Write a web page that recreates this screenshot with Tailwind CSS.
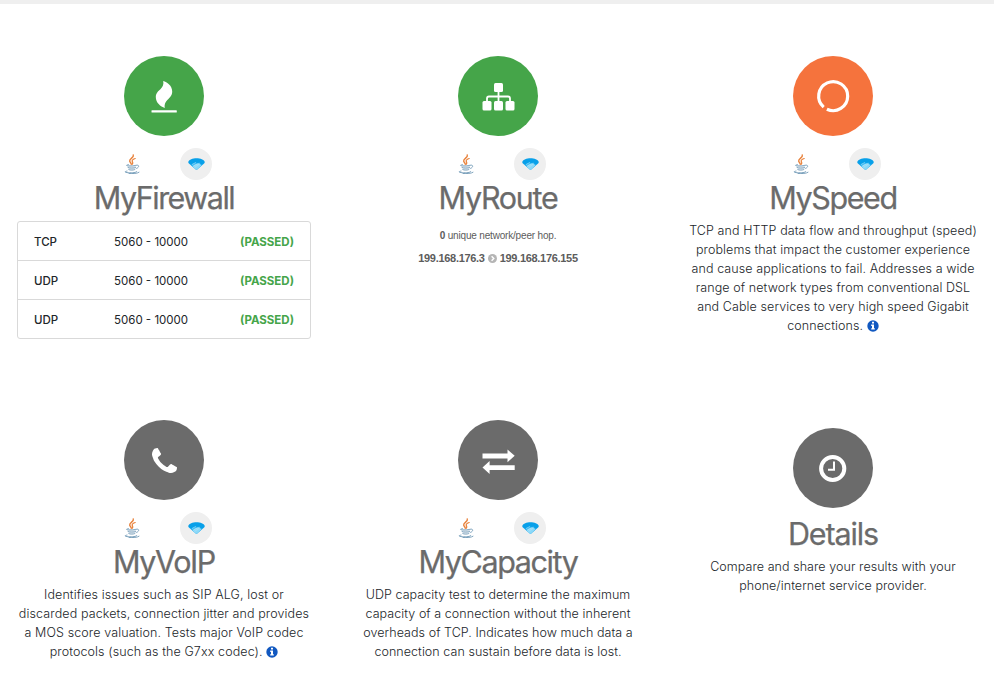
<!DOCTYPE html>
<html lang="en">
<head>
<meta charset="utf-8">
<title>Connection tests</title>
<script src="https://cdn.jsdelivr.net/npm/@tailwindcss/browser@4"></script>
</head>
<body class="bg-white overflow-hidden font-['Inter','Liberation_Sans',sans-serif] text-[#212529]">
<svg class="hidden" aria-hidden="true">
  <symbol id="java" viewBox="0 0 16 20">
    <g fill="none" stroke="#e8813a" stroke-linecap="round">
      <path stroke-width="1.4" d="M9.3 1C10.3 3.6 5.2 4.5 5.7 7.2c.2 1.1 1.5 1.700 1.600 3"/>
      <path stroke-width="1.2" d="M11.2 4.500C9.500 5 7.800 6 8.200 7.300c.3 1 1.200 1.300.2 2.900"/>
    </g>
    <g fill="none" stroke="#6f98b5" stroke-linecap="round">
      <path stroke-width=".9" d="M4.500 10.700c-2.500.3-2.800 1 0 1.200 2.500.2 5.500 0 7.300-.5M4 13.500c1.700.8 5.600.8 7.600 0M4.800 15.600c1.600.7 4.300.7 6 0"/>
      <path stroke-width=".9" d="M12.500 11.200c3-.7 3 2.200.1 3.200"/>
      <path stroke-width=".9" d="M3 17.100c-3.500.6-1.800 1.500 1.200 1.600 4 .2 8.700 0 8.600-1.200M5 19.500c4 .3 8.400 0 10-1.200"/>
    </g>
    <path fill="#a9c2d3" d="M4 11.500h8l-1 4.500H5z" opacity=".5"/>
  </symbol>
  <symbol id="wifi" viewBox="0 0 17 12">
    <path fill="#08a0e9" d="M.3 3.800C1.200 1.500 4.500.2 8.500.2s7.300 1.300 8.200 3.600c.2.800-.3 1.500-1.200 2.300L8.500 12 1.500 6.100C.6 5.300.1 4.600.3 3.800z"/>
    <path fill="#35b7f2" d="M3 7C5.700 4 11.300 4 14 7L8.500 12z"/>
    <path fill="#8bd8f8" d="M4.600 8.500C7 5.500 10.500 5 13.500 7.200L8.500 12z"/>
    <path fill="none" stroke="#b9e8fb" stroke-width=".5" d="M4 6.600l4-2.300M5.300 8l6-3M6.500 9.500l5.500-4"/>
  </symbol>
  <symbol id="info" viewBox="0 0 12 12">
    <circle cx="6" cy="6" r="5.700" fill="#1158c0"/>
    <path fill="#fff" d="M5 1.800h2v1.700H5zM4.200 4.600H7v3.700h.8v1.300H4.200V8.300H5V5.900h-.8z"/>
  </symbol>
</svg>

<div class="h-1 bg-[#efefef]"></div>
<main class="grid grid-cols-[334px_334px_336px] grid-rows-[364px_330px] w-[1004px] -ml-[3px]">

  <section class="flex flex-col items-center pt-[52px]">
    <div class="size-20 rounded-full bg-[#45a549]">
      <svg class="size-20" viewBox="0 0 80 80" fill="#fff"><path d="M39.200 25C43 26.200 48.200 29.500 48.200 35.500c0 4-2.400 6-4.600 8.300-1.800 1.900-3.500 4.300-2.800 8.200-4.200-1.500-9-5.200-9-11 0-4 2.400-5.700 4.600-7.800 2.100-2.100 3.600-4.500 2.800-8.200z"/><rect x="27.500" y="54.200" width="25.300" height="2.300" rx=".6"/></svg>
    </div>
    <div class="flex items-center gap-8 mt-3"><span class="size-8 flex items-center justify-center"><svg class="w-4 h-5"><use href="#java"/></svg></span><span class="size-8 rounded-full bg-[#efefef] flex items-center justify-center"><svg class="w-[17px] h-3"><use href="#wifi"/></svg></span></div>
    <h2 class="text-[30.500px] leading-9 tracking-[-1.5px] [-webkit-text-stroke:.25px_#6b6b6b] text-[#6b6b6b] whitespace-nowrap">MyFirewall</h2>
    <div class="mt-[5px] w-[294px] rounded-[3px] border border-[#d9d9d9] divide-y divide-[#d9d9d9] text-[11.500px] leading-[38px]">
      <div class="flex h-[39px] pl-4 pr-4 pt-px"><span class="w-20 font-medium">TCP</span><span class="flex-1">5060 - 10000</span><b class="font-bold text-[#45a549]">(PASSED)</b></div>
      <div class="flex h-[39px] pl-4 pr-4 pt-px"><span class="w-20 font-medium">UDP</span><span class="flex-1">5060 - 10000</span><b class="font-bold text-[#45a549]">(PASSED)</b></div>
      <div class="flex h-[38px] pl-4 pr-4 pt-px"><span class="w-20 font-medium">UDP</span><span class="flex-1">5060 - 10000</span><b class="font-bold text-[#45a549]">(PASSED)</b></div>
    </div>
  </section>

  <section class="flex flex-col items-center pt-[52px]">
    <div class="size-20 rounded-full bg-[#45a549]">
      <svg class="size-20" viewBox="0 0 80 80" fill="#fff"><rect x="36" y="27" width="9" height="9" rx="1.500"/><rect x="24.500" y="45" width="9" height="9.500" rx="1.500"/><rect x="36" y="45" width="9" height="9.500" rx="1.500"/><rect x="47.500" y="45" width="9" height="9.500" rx="1.500"/><path fill="none" stroke="#fff" stroke-width="1.800" d="M40.500 35v11M29 46v-3.500q0-2 2-2h19q2 0 2 2V46"/></svg>
    </div>
    <div class="flex items-center gap-8 mt-3"><span class="size-8 flex items-center justify-center"><svg class="w-4 h-5"><use href="#java"/></svg></span><span class="size-8 rounded-full bg-[#efefef] flex items-center justify-center"><svg class="w-[17px] h-3"><use href="#wifi"/></svg></span></div>
    <h2 class="text-[30.500px] leading-9 tracking-[-1.3px] [-webkit-text-stroke:.25px_#6b6b6b] text-[#6b6b6b] whitespace-nowrap">MyRoute</h2>
    <p class="mt-3 font-['Liberation_Sans',sans-serif] text-[10px] leading-4 tracking-[-.18px] text-[#5c5c5c]"><b>0</b> unique network/peer hop.</p>
    <p class="mt-1.5 font-['Liberation_Sans',sans-serif] font-bold text-[11px] leading-4 tracking-[-.3px] text-[#5c5c5c] flex items-center gap-[3px]"><span>199.168.176.3</span><svg class="size-[9px]" viewBox="0 0 9 9"><circle cx="4.500" cy="4.500" r="4.500" fill="#b5b5b5"/><path d="M3.600 2.200l2.200 2.300-2.200 2.300" fill="none" stroke="#fff" stroke-width="1.400"/></svg><span>199.168.176.155</span></p>
  </section>

  <section class="flex flex-col items-center pt-[52px]">
    <div class="size-20 rounded-full bg-[#f5733d]">
      <svg class="size-20" viewBox="0 0 80 80"><path fill="none" stroke="#fff" stroke-width="3.200" d="M30.700 51.100A14.500 14.500 0 1 1 33.900 53.200"/></svg>
    </div>
    <div class="flex items-center gap-8 mt-3"><span class="size-8 flex items-center justify-center"><svg class="w-4 h-5"><use href="#java"/></svg></span><span class="size-8 rounded-full bg-[#efefef] flex items-center justify-center"><svg class="w-[17px] h-3"><use href="#wifi"/></svg></span></div>
    <h2 class="text-[30.500px] leading-9 tracking-[-1.4px] [-webkit-text-stroke:.25px_#6b6b6b] text-[#6b6b6b] whitespace-nowrap">MySpeed</h2>
    <p class="mt-[5px] text-center text-[12.500px] leading-[19px] tracking-[.09px] font-light whitespace-nowrap">TCP and HTTP data flow and throughput (speed)<br>problems that impact the customer experience<br>and cause applications to fail. Addresses a wide<br>range of network types from conventional DSL<br>and Cable services to very high speed Gigabit<br>connections. <svg class="inline size-3 align-[-1.5px]"><use href="#info"/></svg></p>
  </section>

  <section class="flex flex-col items-center pt-[52px]">
    <div class="size-20 rounded-full bg-[#6b6b6b] flex items-center justify-center">
      <svg class="size-[25px]" viewBox="0 0 1408 1408" fill="#fff"><path d="M1408 1112q0 27-10 70.500t-21 68.500q-21 50-122 106-94 51-186 51-27 0-53-3.500t-57.500-12.500-47-14.500-55.500-20.500-49-18q-98-35-175-83-127-79-264-216t-216-264q-48-77-83-175-3-9-18-49t-20.500-55.500-14.500-47-12.500-57.500-3.500-53q0-92 51-186 56-101 106-122 25-11 68.500-21t70.500-10q14 0 21 3 18 6 53 76 11 19 30 54t35 63.500 31 53.500q3 4 17.500 25t21.500 35.500 7 28.500q0 20-28.500 50t-62 55-62 53-28.500 46q0 9 5 22.500t8.500 20.500 14 24 11.500 19q76 137 174 235t235 174q2 1 19 11.500t24 14 20.500 8.500 22.500 5q18 0 46-28.500t53-62 55-62 50-28.500q14 0 28.500 7t35.500 21.500 25 17.500q25 15 53.500 31t63.500 35 54 30q70 35 76 53 3 7 3 21z"/></svg>
    </div>
    <div class="flex items-center gap-8 mt-3"><span class="size-8 flex items-center justify-center"><svg class="w-4 h-5"><use href="#java"/></svg></span><span class="size-8 rounded-full bg-[#efefef] flex items-center justify-center"><svg class="w-[17px] h-3"><use href="#wifi"/></svg></span></div>
    <h2 class="text-[30.500px] leading-9 tracking-[-1.4px] [-webkit-text-stroke:.25px_#6b6b6b] text-[#6b6b6b] whitespace-nowrap">MyVoIP</h2>
    <p class="mt-[5px] text-center text-[12.500px] leading-[19px] tracking-[.11px] font-light whitespace-nowrap">Identifies issues such as SIP ALG, lost or<br>discarded packets, connection jitter and provides<br>a MOS score valuation. Tests major VoIP codec<br>protocols (such as the G7xx codec). <svg class="inline size-3 align-[-1.5px]"><use href="#info"/></svg></p>
  </section>

  <section class="flex flex-col items-center pt-[52px]">
    <div class="size-20 rounded-full bg-[#6b6b6b]">
      <svg class="size-20" viewBox="0 0 80 80" fill="#fff"><path d="M24.500 33.600h25v-4.100l7.200 6.300-7.200 6.400v-3.700h-25zM56.700 45.200H31.600v-4.100l-7.100 6.300 7.100 6.600v-4.100h25.100z"/></svg>
    </div>
    <div class="flex items-center gap-8 mt-3"><span class="size-8 flex items-center justify-center"><svg class="w-4 h-5"><use href="#java"/></svg></span><span class="size-8 rounded-full bg-[#efefef] flex items-center justify-center"><svg class="w-[17px] h-3"><use href="#wifi"/></svg></span></div>
    <h2 class="text-[30.500px] leading-9 tracking-[-1.4px] [-webkit-text-stroke:.25px_#6b6b6b] text-[#6b6b6b] whitespace-nowrap">MyCapacity</h2>
    <p class="mt-[5px] text-center text-[12.500px] leading-[19px] tracking-[.06px] font-light whitespace-nowrap">UDP capacity test to determine the maximum<br>capacity of a connection without the inherent<br>overheads of TCP. Indicates how much data a<br>connection can sustain before data is lost.</p>
  </section>

  <section class="flex flex-col items-center pt-[60px]">
    <div class="size-20 rounded-full bg-[#6b6b6b]">
      <svg class="size-20" viewBox="0 0 80 80" fill="none" stroke="#fff"><circle cx="39.700" cy="40.500" r="11.600" stroke-width="4"/><path stroke-width="2" d="M41 33.500v8.300h-6"/></svg>
    </div>
    <h2 class="mt-2 text-[30.500px] leading-9 tracking-[-1.1px] [-webkit-text-stroke:.25px_#6b6b6b] text-[#6b6b6b] whitespace-nowrap">Details</h2>
    <p class="mt-[5px] text-center text-[12.500px] leading-[19px] tracking-[.06px] font-light whitespace-nowrap">Compare and share your results with your<br>phone/internet service provider.</p>
  </section>
</main>
</body>
</html>
